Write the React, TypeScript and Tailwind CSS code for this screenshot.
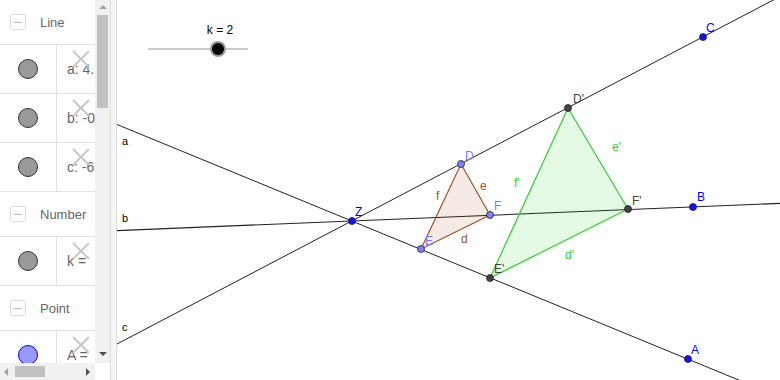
import React from "react";

type Row =
  | { kind: "header"; label: string }
  | { kind: "item"; text: string; fill: string; stroke: string; h?: number };

const rows: Row[] = [
  { kind: "header", label: "Line" },
  { kind: "item", text: "a: 4.", fill: "#999999", stroke: "#333333" },
  { kind: "item", text: "b: -0", fill: "#999999", stroke: "#333333" },
  { kind: "item", text: "c: -6", fill: "#999999", stroke: "#333333" },
  { kind: "header", label: "Number" },
  { kind: "item", text: "k =", fill: "#999999", stroke: "#333333" },
  { kind: "header", label: "Point" },
  { kind: "item", text: "A =", fill: "#9999ff", stroke: "#0000ff" },
];

function Cross() {
  return (
    <svg width="20" height="18" viewBox="0 0 20 18" className="absolute left-[14px] top-[5px]">
      <path d="M2 1 L18 17 M18 1 L2 17" stroke="#c8c8c8" strokeWidth="2" />
    </svg>
  );
}

function Sidebar() {
  return (
    <div className="flex h-full w-[95px] flex-col overflow-hidden bg-white">
      <div className="flex-1 overflow-hidden">
        {rows.map((r, i) =>
          r.kind === "header" ? (
            <div key={i} className="flex h-[45px] items-center border-b border-[#e0e0e0] pl-[10px]">
              <div className="flex h-[16px] w-[16px] items-center justify-center rounded-[3px] border border-[#dcdcdc]">
                <div className="h-px w-[8px] bg-[#bbbbbb]" />
              </div>
              <span className="ml-[14px] mt-[1px] text-[13px] text-[#666666]">{r.label}</span>
            </div>
          ) : (
            <div key={i} className="flex h-[49px] border-b border-[#e0e0e0]">
              <div className="flex w-[57px] items-center justify-center border-r border-[#e0e0e0]">
                <div
                  className="h-[20px] w-[20px] rounded-full border"
                  style={{ background: r.fill, borderColor: r.stroke }}
                />
              </div>
              <div className="relative flex flex-1 items-center overflow-hidden pl-[10px] text-[14px] text-[#666666]">
                <span className="whitespace-nowrap">{r.text}</span>
                <Cross />
              </div>
            </div>
          )
        )}
      </div>
      <div className="flex h-[17px] shrink-0 items-center bg-[#f1f1f1]">
        <div className="ml-[4px] h-0 w-0 border-y-[4px] border-r-[4px] border-y-transparent border-r-[#a3a3a3]" />
        <div className="ml-[7px] h-[11px] w-[30px] bg-[#c1c1c1]" />
        <div className="ml-auto mr-[5px] h-0 w-0 border-y-[4px] border-l-[4px] border-y-transparent border-l-[#505050]" />
      </div>
    </div>
  );
}

function VScroll() {
  return (
    <div className="flex h-full w-[15px] flex-col">
      <div className="flex h-[363px] flex-col items-center bg-[#f1f1f1]">
        <div className="mt-[5px] h-0 w-0 border-x-[4px] border-b-[4px] border-x-transparent border-b-[#a3a3a3]" />
        <div className="mt-[6px] h-[93px] w-[11px] bg-[#c1c1c1]" />
        <div className="mt-auto mb-[7px] h-0 w-0 border-x-[4px] border-t-[4px] border-x-transparent border-t-[#505050]" />
      </div>
      <div className="flex-1 bg-white" />
    </div>
  );
}

const Z = { x: 352, y: 221 };

function Pt({ x, y, fill }: { x: number; y: number; fill: string }) {
  return <circle cx={x} cy={y} r={3.5} fill={fill} stroke="#222" strokeWidth={0.8} />;
}

function Canvas() {
  const D = { x: 461, y: 164 };
  const E = { x: 421, y: 249 };
  const F = { x: 490, y: 215 };
  const D2 = { x: 568, y: 108 };
  const E2 = { x: 490, y: 278 };
  const F2 = { x: 628, y: 209 };
  const font = { fontFamily: '"Liberation Sans", Arial, sans-serif' };
  return (
    <svg width="663" height="380" viewBox="117 0 663 380" className="block" style={font}>
      {/* slider */}
      <line x1="148" y1="49" x2="248" y2="49" stroke="#999" strokeWidth="1" />
      <circle cx="218" cy="49" r="8" fill="#9a9a9a" />
      <circle cx="218" cy="49" r="6" fill="#000" />
      <text x="220" y="34" fontSize="12" textAnchor="middle" fill="#000">k = 2</text>

      {/* lines */}
      <line x1="117" y1="124.5" x2="780" y2="397" stroke="#222" strokeWidth="1" />
      <line x1="117" y1="230.6" x2="780" y2="203.4" stroke="#222" strokeWidth="1.1" />
      <line x1="117" y1="344" x2="780" y2="-3.5" stroke="#222" strokeWidth="1" />
      <text x="122" y="145" fontSize="11" fill="#000">a</text>
      <text x="122" y="222" fontSize="11" fill="#000">b</text>
      <text x="122" y="331" fontSize="11" fill="#000">c</text>

      {/* triangle DEF */}
      <polygon
        points={`${D.x},${D.y} ${F.x},${F.y} ${E.x},${E.y}`}
        fill="rgba(153,51,0,0.1)"
        stroke="#a0522d"
        strokeWidth="1.2"
      />
      {/* triangle D'E'F' */}
      <polygon
        points={`${D2.x},${D2.y} ${F2.x},${F2.y} ${E2.x},${E2.y}`}
        fill="rgba(0,204,0,0.1)"
        stroke="#33cc33"
        strokeWidth="1.2"
      />

      {/* side labels */}
      <g fontSize="12" fill="#a0522d">
        <text x="436" y="200">f</text>
        <text x="480" y="190">e</text>
        <text x="461" y="243">d</text>
      </g>
      <g fontSize="12" fill="#33cc33">
        <text x="612" y="151">e'</text>
        <text x="514" y="187">f'</text>
        <text x="565" y="259">d'</text>
      </g>

      {/* points */}
      <Pt x={Z.x} y={Z.y} fill="#1010ff" />
      <Pt x={703} y={37} fill="#1010ff" />
      <Pt x={693} y={207} fill="#1010ff" />
      <Pt x={688} y={359} fill="#1010ff" />
      <Pt x={D.x} y={D.y} fill="#8080ff" />
      <Pt x={E.x} y={E.y} fill="#8080ff" />
      <Pt x={F.x} y={F.y} fill="#8080ff" />
      <Pt x={D2.x} y={D2.y} fill="#444" />
      <Pt x={E2.x} y={E2.y} fill="#444" />
      <Pt x={F2.x} y={F2.y} fill="#444" />

      {/* point labels */}
      <g fontSize="12" fill="#0000ff">
        <text x="355" y="216">Z</text>
        <text x="706" y="32">C</text>
        <text x="697" y="201">B</text>
        <text x="691" y="354">A</text>
      </g>
      <g fontSize="12" fill="#7777ff">
        <text x="465" y="160">D</text>
        <text x="425" y="245">E</text>
        <text x="494" y="210">F</text>
      </g>
      <g fontSize="12" fill="#444">
        <text x="573" y="103">D'</text>
        <text x="494" y="273">E'</text>
        <text x="632" y="205">F'</text>
      </g>
    </svg>
  );
}

export default function App() {
  return (
    <div
      className="flex h-[380px] w-[780px] overflow-hidden bg-white"
      style={{ fontFamily: '"Liberation Sans", Arial, sans-serif' }}
    >
      <Sidebar />
      <VScroll />
      <div className="h-full w-[7px] border-l border-r border-[#dcdcdc] bg-[#f6f6f6]" />
      <Canvas />
    </div>
  );
}
